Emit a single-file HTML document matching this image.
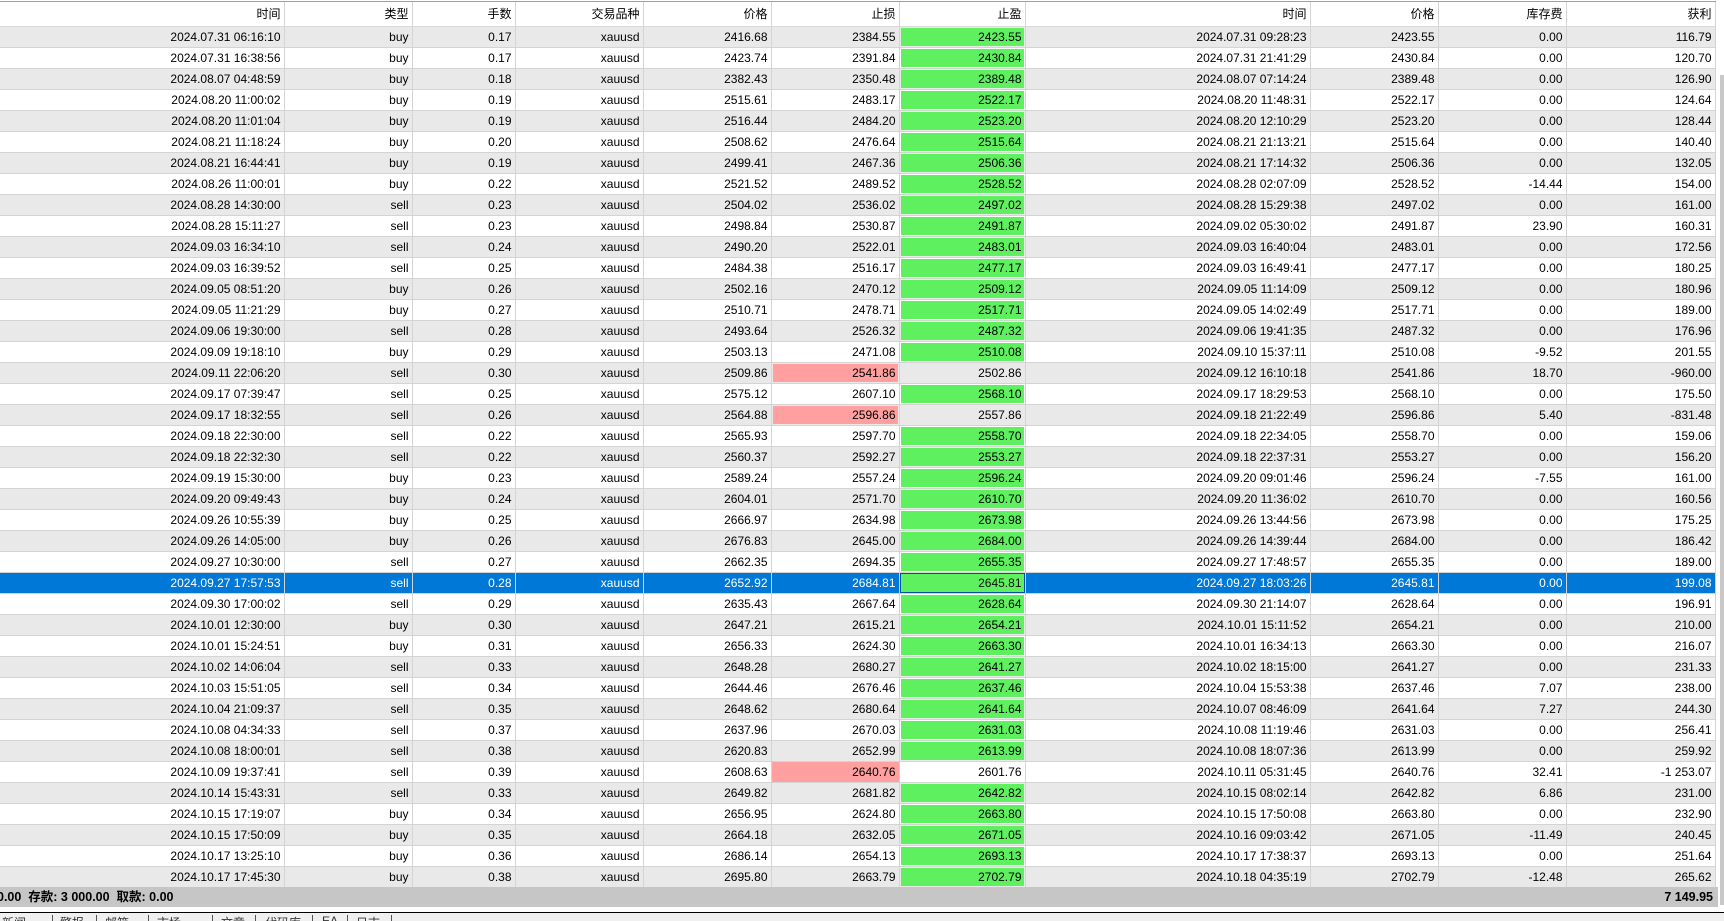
<!DOCTYPE html>
<html><head><meta charset="utf-8">
<style>
*{margin:0;padding:0;box-sizing:border-box}
html,body{width:1724px;height:921px;overflow:hidden;background:#fff;font-family:"Liberation Sans","Noto Sans CJK SC",sans-serif;font-size:12px;color:#000}
#wrap{position:absolute;left:0;top:1px;width:1716px;border-top:1px solid #a0a0a0}
table{border-collapse:collapse;table-layout:fixed;width:1715px}
td,th{text-align:right;padding:0 3px 0 0;border-right:1px solid #d4d4d4;border-bottom:1px solid #d4d4d4;white-space:nowrap;overflow:hidden;font-weight:normal}
th{height:24px;background:#fff;border-bottom:1px solid #dadada}
tr{height:21px}
tbody tr:nth-child(odd) td{background:#e9e9e9}
tbody tr:nth-child(even) td{background:#fff}
td.g{box-shadow:inset 0 0 0 1px #fff}
tbody tr td.g{background:#5ff05f !important}
tbody tr td.p{background:#ff9f9f !important}
tbody tr:nth-child(odd) td.g,tbody tr:nth-child(odd) td.p{box-shadow:inset 0 0 0 1px #e9e9e9}
tbody tr.s td{background:#0078d7 !important;color:#fff}
tbody tr.s td.g{background:#5ff05f !important;color:#111;box-shadow:inset 0 0 0 1px #0050a0}
#foot{position:absolute;left:0;top:887px;width:1718px;height:20px;background:#c6c6c6;font-weight:bold;font-size:12.5px;line-height:20px}
#foot .l{position:absolute;left:-3px}
#foot .r{position:absolute;right:5px}
#line{position:absolute;left:0;top:912px;width:1724px;height:1px;background:#000}
#tabs{position:absolute;left:0;top:913px;width:1724px;height:8px;background:#f0f0f0;overflow:hidden}
#tabs span{position:absolute;top:1px;font-size:12px;color:#333}
#tabs i{position:absolute;top:2px;width:1px;height:8px;background:#555}
#sb{position:absolute;left:1720px;top:75px;width:4px;height:830px;background:#c8c8c8}
</style></head><body>
<div id="wrap">
<table>
<colgroup><col style="width:284px"><col style="width:128px"><col style="width:103px"><col style="width:128px"><col style="width:128px"><col style="width:128px"><col style="width:126px"><col style="width:285px"><col style="width:128px"><col style="width:128px"><col style="width:149px"></colgroup>
<thead><tr><th>时间</th><th>类型</th><th>手数</th><th>交易品种</th><th>价格</th><th>止损</th><th>止盈</th><th>时间</th><th>价格</th><th>库存费</th><th>获利</th></tr></thead>
<tbody>
<tr><td>2024.07.31 06:16:10</td><td>buy</td><td>0.17</td><td>xauusd</td><td>2416.68</td><td>2384.55</td><td class="g">2423.55</td><td>2024.07.31 09:28:23</td><td>2423.55</td><td>0.00</td><td>116.79</td></tr>
<tr><td>2024.07.31 16:38:56</td><td>buy</td><td>0.17</td><td>xauusd</td><td>2423.74</td><td>2391.84</td><td class="g">2430.84</td><td>2024.07.31 21:41:29</td><td>2430.84</td><td>0.00</td><td>120.70</td></tr>
<tr><td>2024.08.07 04:48:59</td><td>buy</td><td>0.18</td><td>xauusd</td><td>2382.43</td><td>2350.48</td><td class="g">2389.48</td><td>2024.08.07 07:14:24</td><td>2389.48</td><td>0.00</td><td>126.90</td></tr>
<tr><td>2024.08.20 11:00:02</td><td>buy</td><td>0.19</td><td>xauusd</td><td>2515.61</td><td>2483.17</td><td class="g">2522.17</td><td>2024.08.20 11:48:31</td><td>2522.17</td><td>0.00</td><td>124.64</td></tr>
<tr><td>2024.08.20 11:01:04</td><td>buy</td><td>0.19</td><td>xauusd</td><td>2516.44</td><td>2484.20</td><td class="g">2523.20</td><td>2024.08.20 12:10:29</td><td>2523.20</td><td>0.00</td><td>128.44</td></tr>
<tr><td>2024.08.21 11:18:24</td><td>buy</td><td>0.20</td><td>xauusd</td><td>2508.62</td><td>2476.64</td><td class="g">2515.64</td><td>2024.08.21 21:13:21</td><td>2515.64</td><td>0.00</td><td>140.40</td></tr>
<tr><td>2024.08.21 16:44:41</td><td>buy</td><td>0.19</td><td>xauusd</td><td>2499.41</td><td>2467.36</td><td class="g">2506.36</td><td>2024.08.21 17:14:32</td><td>2506.36</td><td>0.00</td><td>132.05</td></tr>
<tr><td>2024.08.26 11:00:01</td><td>buy</td><td>0.22</td><td>xauusd</td><td>2521.52</td><td>2489.52</td><td class="g">2528.52</td><td>2024.08.28 02:07:09</td><td>2528.52</td><td>-14.44</td><td>154.00</td></tr>
<tr><td>2024.08.28 14:30:00</td><td>sell</td><td>0.23</td><td>xauusd</td><td>2504.02</td><td>2536.02</td><td class="g">2497.02</td><td>2024.08.28 15:29:38</td><td>2497.02</td><td>0.00</td><td>161.00</td></tr>
<tr><td>2024.08.28 15:11:27</td><td>sell</td><td>0.23</td><td>xauusd</td><td>2498.84</td><td>2530.87</td><td class="g">2491.87</td><td>2024.09.02 05:30:02</td><td>2491.87</td><td>23.90</td><td>160.31</td></tr>
<tr><td>2024.09.03 16:34:10</td><td>sell</td><td>0.24</td><td>xauusd</td><td>2490.20</td><td>2522.01</td><td class="g">2483.01</td><td>2024.09.03 16:40:04</td><td>2483.01</td><td>0.00</td><td>172.56</td></tr>
<tr><td>2024.09.03 16:39:52</td><td>sell</td><td>0.25</td><td>xauusd</td><td>2484.38</td><td>2516.17</td><td class="g">2477.17</td><td>2024.09.03 16:49:41</td><td>2477.17</td><td>0.00</td><td>180.25</td></tr>
<tr><td>2024.09.05 08:51:20</td><td>buy</td><td>0.26</td><td>xauusd</td><td>2502.16</td><td>2470.12</td><td class="g">2509.12</td><td>2024.09.05 11:14:09</td><td>2509.12</td><td>0.00</td><td>180.96</td></tr>
<tr><td>2024.09.05 11:21:29</td><td>buy</td><td>0.27</td><td>xauusd</td><td>2510.71</td><td>2478.71</td><td class="g">2517.71</td><td>2024.09.05 14:02:49</td><td>2517.71</td><td>0.00</td><td>189.00</td></tr>
<tr><td>2024.09.06 19:30:00</td><td>sell</td><td>0.28</td><td>xauusd</td><td>2493.64</td><td>2526.32</td><td class="g">2487.32</td><td>2024.09.06 19:41:35</td><td>2487.32</td><td>0.00</td><td>176.96</td></tr>
<tr><td>2024.09.09 19:18:10</td><td>buy</td><td>0.29</td><td>xauusd</td><td>2503.13</td><td>2471.08</td><td class="g">2510.08</td><td>2024.09.10 15:37:11</td><td>2510.08</td><td>-9.52</td><td>201.55</td></tr>
<tr><td>2024.09.11 22:06:20</td><td>sell</td><td>0.30</td><td>xauusd</td><td>2509.86</td><td class="p">2541.86</td><td>2502.86</td><td>2024.09.12 16:10:18</td><td>2541.86</td><td>18.70</td><td>-960.00</td></tr>
<tr><td>2024.09.17 07:39:47</td><td>sell</td><td>0.25</td><td>xauusd</td><td>2575.12</td><td>2607.10</td><td class="g">2568.10</td><td>2024.09.17 18:29:53</td><td>2568.10</td><td>0.00</td><td>175.50</td></tr>
<tr><td>2024.09.17 18:32:55</td><td>sell</td><td>0.26</td><td>xauusd</td><td>2564.88</td><td class="p">2596.86</td><td>2557.86</td><td>2024.09.18 21:22:49</td><td>2596.86</td><td>5.40</td><td>-831.48</td></tr>
<tr><td>2024.09.18 22:30:00</td><td>sell</td><td>0.22</td><td>xauusd</td><td>2565.93</td><td>2597.70</td><td class="g">2558.70</td><td>2024.09.18 22:34:05</td><td>2558.70</td><td>0.00</td><td>159.06</td></tr>
<tr><td>2024.09.18 22:32:30</td><td>sell</td><td>0.22</td><td>xauusd</td><td>2560.37</td><td>2592.27</td><td class="g">2553.27</td><td>2024.09.18 22:37:31</td><td>2553.27</td><td>0.00</td><td>156.20</td></tr>
<tr><td>2024.09.19 15:30:00</td><td>buy</td><td>0.23</td><td>xauusd</td><td>2589.24</td><td>2557.24</td><td class="g">2596.24</td><td>2024.09.20 09:01:46</td><td>2596.24</td><td>-7.55</td><td>161.00</td></tr>
<tr><td>2024.09.20 09:49:43</td><td>buy</td><td>0.24</td><td>xauusd</td><td>2604.01</td><td>2571.70</td><td class="g">2610.70</td><td>2024.09.20 11:36:02</td><td>2610.70</td><td>0.00</td><td>160.56</td></tr>
<tr><td>2024.09.26 10:55:39</td><td>buy</td><td>0.25</td><td>xauusd</td><td>2666.97</td><td>2634.98</td><td class="g">2673.98</td><td>2024.09.26 13:44:56</td><td>2673.98</td><td>0.00</td><td>175.25</td></tr>
<tr><td>2024.09.26 14:05:00</td><td>buy</td><td>0.26</td><td>xauusd</td><td>2676.83</td><td>2645.00</td><td class="g">2684.00</td><td>2024.09.26 14:39:44</td><td>2684.00</td><td>0.00</td><td>186.42</td></tr>
<tr><td>2024.09.27 10:30:00</td><td>sell</td><td>0.27</td><td>xauusd</td><td>2662.35</td><td>2694.35</td><td class="g">2655.35</td><td>2024.09.27 17:48:57</td><td>2655.35</td><td>0.00</td><td>189.00</td></tr>
<tr class="s"><td>2024.09.27 17:57:53</td><td>sell</td><td>0.28</td><td>xauusd</td><td>2652.92</td><td>2684.81</td><td class="g">2645.81</td><td>2024.09.27 18:03:26</td><td>2645.81</td><td>0.00</td><td>199.08</td></tr>
<tr><td>2024.09.30 17:00:02</td><td>sell</td><td>0.29</td><td>xauusd</td><td>2635.43</td><td>2667.64</td><td class="g">2628.64</td><td>2024.09.30 21:14:07</td><td>2628.64</td><td>0.00</td><td>196.91</td></tr>
<tr><td>2024.10.01 12:30:00</td><td>buy</td><td>0.30</td><td>xauusd</td><td>2647.21</td><td>2615.21</td><td class="g">2654.21</td><td>2024.10.01 15:11:52</td><td>2654.21</td><td>0.00</td><td>210.00</td></tr>
<tr><td>2024.10.01 15:24:51</td><td>buy</td><td>0.31</td><td>xauusd</td><td>2656.33</td><td>2624.30</td><td class="g">2663.30</td><td>2024.10.01 16:34:13</td><td>2663.30</td><td>0.00</td><td>216.07</td></tr>
<tr><td>2024.10.02 14:06:04</td><td>sell</td><td>0.33</td><td>xauusd</td><td>2648.28</td><td>2680.27</td><td class="g">2641.27</td><td>2024.10.02 18:15:00</td><td>2641.27</td><td>0.00</td><td>231.33</td></tr>
<tr><td>2024.10.03 15:51:05</td><td>sell</td><td>0.34</td><td>xauusd</td><td>2644.46</td><td>2676.46</td><td class="g">2637.46</td><td>2024.10.04 15:53:38</td><td>2637.46</td><td>7.07</td><td>238.00</td></tr>
<tr><td>2024.10.04 21:09:37</td><td>sell</td><td>0.35</td><td>xauusd</td><td>2648.62</td><td>2680.64</td><td class="g">2641.64</td><td>2024.10.07 08:46:09</td><td>2641.64</td><td>7.27</td><td>244.30</td></tr>
<tr><td>2024.10.08 04:34:33</td><td>sell</td><td>0.37</td><td>xauusd</td><td>2637.96</td><td>2670.03</td><td class="g">2631.03</td><td>2024.10.08 11:19:46</td><td>2631.03</td><td>0.00</td><td>256.41</td></tr>
<tr><td>2024.10.08 18:00:01</td><td>sell</td><td>0.38</td><td>xauusd</td><td>2620.83</td><td>2652.99</td><td class="g">2613.99</td><td>2024.10.08 18:07:36</td><td>2613.99</td><td>0.00</td><td>259.92</td></tr>
<tr><td>2024.10.09 19:37:41</td><td>sell</td><td>0.39</td><td>xauusd</td><td>2608.63</td><td class="p">2640.76</td><td>2601.76</td><td>2024.10.11 05:31:45</td><td>2640.76</td><td>32.41</td><td>-1 253.07</td></tr>
<tr><td>2024.10.14 15:43:31</td><td>sell</td><td>0.33</td><td>xauusd</td><td>2649.82</td><td>2681.82</td><td class="g">2642.82</td><td>2024.10.15 08:02:14</td><td>2642.82</td><td>6.86</td><td>231.00</td></tr>
<tr><td>2024.10.15 17:19:07</td><td>buy</td><td>0.34</td><td>xauusd</td><td>2656.95</td><td>2624.80</td><td class="g">2663.80</td><td>2024.10.15 17:50:08</td><td>2663.80</td><td>0.00</td><td>232.90</td></tr>
<tr><td>2024.10.15 17:50:09</td><td>buy</td><td>0.35</td><td>xauusd</td><td>2664.18</td><td>2632.05</td><td class="g">2671.05</td><td>2024.10.16 09:03:42</td><td>2671.05</td><td>-11.49</td><td>240.45</td></tr>
<tr><td>2024.10.17 13:25:10</td><td>buy</td><td>0.36</td><td>xauusd</td><td>2686.14</td><td>2654.13</td><td class="g">2693.13</td><td>2024.10.17 17:38:37</td><td>2693.13</td><td>0.00</td><td>251.64</td></tr>
<tr><td>2024.10.17 17:45:30</td><td>buy</td><td>0.38</td><td>xauusd</td><td>2695.80</td><td>2663.79</td><td class="g">2702.79</td><td>2024.10.18 04:35:19</td><td>2702.79</td><td>-12.48</td><td>265.62</td></tr>
</tbody></table>
</div>
<div id="sb"></div>
<div id="foot"><span class="l">0.00&nbsp; 存款: 3 000.00&nbsp; 取款: 0.00</span><span class="r">7 149.95</span></div>
<div id="line"></div>
<div id="tabs">
<span style="left:2px">新闻</span><i style="left:52px"></i>
<span style="left:60px">警报</span><i style="left:96px"></i>
<span style="left:105px">邮箱</span><i style="left:148px"></i>
<span style="left:157px">市场</span><i style="left:212px"></i>
<span style="left:221px">文章</span><i style="left:255px"></i>
<span style="left:265px">代码库</span><i style="left:312px"></i>
<span style="left:322px">EA</span><i style="left:347px"></i>
<span style="left:356px">日志</span><i style="left:391px"></i>
</div>
</body></html>
